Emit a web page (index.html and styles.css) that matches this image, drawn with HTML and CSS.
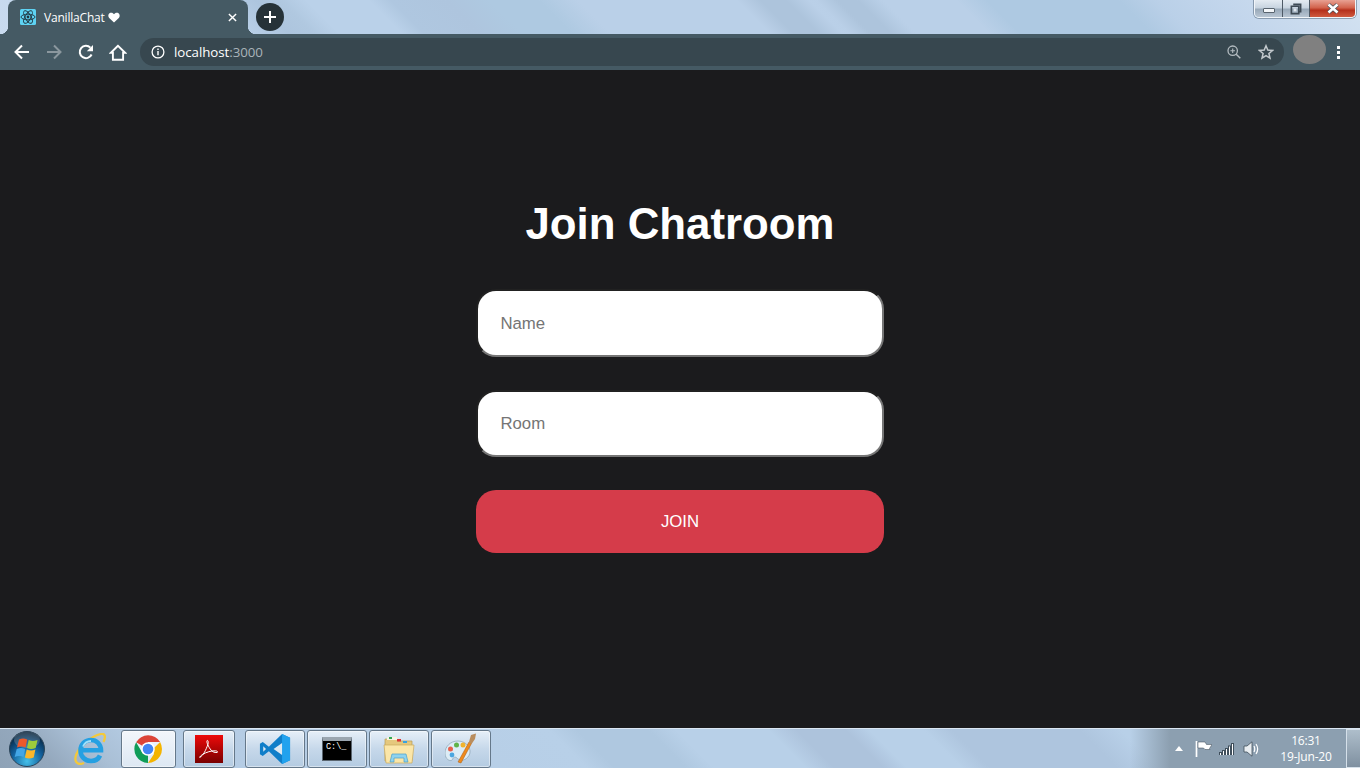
FILE: index.html
```html
<!DOCTYPE html>
<html lang="en">
<head>
<meta charset="utf-8">
<title>VanillaChat</title>
<link rel="stylesheet" href="styles.css">
</head>
<body>
<div class="screen">
  <header class="chrome">
    <div class="titlebar">
      <div class="tab">
        <svg class="favicon" viewBox="0 0 16 16"><rect width="16" height="16" rx="1.5" fill="#5ed3f3"/><g fill="none" stroke="#20343f" stroke-width=".9"><ellipse cx="8" cy="8" rx="7" ry="2.8"/><ellipse cx="8" cy="8" rx="7" ry="2.8" transform="rotate(60 8 8)"/><ellipse cx="8" cy="8" rx="7" ry="2.8" transform="rotate(120 8 8)"/></g><circle cx="8" cy="8" r="1.4" fill="#20343f"/></svg>
        <span class="tab-title">VanillaChat</span>
        <svg class="heart" viewBox="0 0 12 11"><path d="M6 10.6 1.2 5.9C-.3 4.3.2 1.5 2.3.8 3.8.3 5.2.9 6 2.3 6.8.9 8.2.3 9.7.8c2.1.7 2.6 3.5 1.100 5.100z" fill="#fff"/></svg>
        <svg class="tab-close" viewBox="0 0 10 10"><path d="M1 1l8 8M9 1l-8 8" stroke="#fff" stroke-width="1.6"/></svg>
      </div>
      <div class="newtab"><svg viewBox="0 0 14 14"><path d="M7 1v12M1 7h12" stroke="#fff" stroke-width="2"/></svg></div>
      <div class="winbtns">
        <div class="wb wb-min"><span class="min-glyph"></span></div>
        <div class="wb wb-max"><svg viewBox="0 0 13 13"><path d="M3.5 1.500h8v8h-2M1.500 3.500h8v8h-8z" fill="none" stroke="#3e4a55" stroke-width="1.8"/><rect x="4" y="6" width="3" height="3" fill="#dfe6ec"/></svg></div>
        <div class="wb wb-close"><svg viewBox="0 0 14 11"><path d="M2.500 1.500l9 8M11.500 1.500l-9 8" stroke="#46505a" stroke-width="4"/><path d="M2.500 1.500l9 8M11.500 1.500l-9 8" stroke="#fff" stroke-width="2.6"/></svg></div>
      </div>
    </div>
    <div class="toolbar">
      <svg class="navicon" viewBox="0 0 16 16"><path d="M15 8H2M8 1.500 1.500 8 8 14.500" fill="none" stroke="#fff" stroke-width="2"/></svg>
      <svg class="navicon" viewBox="0 0 16 16"><path d="M1 8h13M8 1.500 14.500 8 8 14.500" fill="none" stroke="#8b979e" stroke-width="2"/></svg>
      <svg class="navicon" viewBox="0 0 16 16"><path d="M13.600 10.500A6.200 6.200 0 1 1 12.400 3.600" fill="none" stroke="#fff" stroke-width="2"/><path d="M15 1v6.200H8.800z" fill="#fff"/></svg>
      <svg class="navicon home" viewBox="0 0 18 17"><path d="M9 1.800 1.800 8.800h2.100v7h10.200v-7h2.100z" fill="none" stroke="#fff" stroke-width="1.900"/></svg>
      <div class="omnibox">
        <svg class="info" viewBox="0 0 14 14"><circle cx="7" cy="7" r="5.900" fill="none" stroke="#fff" stroke-width="1.300"/><path d="M6.300 6h1.400v4.300H6.300zM6.300 3.500h1.400v1.400H6.300z" fill="#fff"/></svg>
        <span class="url">localhost<span class="port">:3000</span></span>
        <svg class="zoomicon" viewBox="0 0 14 14"><circle cx="5.700" cy="5.700" r="4.700" fill="none" stroke="#b4bcc1" stroke-width="1.300"/><path d="M9.200 9.200 13.300 13.300" stroke="#b4bcc1" stroke-width="1.500"/><path d="M3.400 5.700h4.600M5.700 3.400V8" stroke="#b4bcc1" stroke-width="1.100"/></svg>
        <svg class="star" viewBox="0 0 16 16"><path d="M8 1.800l1.800 4.300 4.700.4-3.600 3 1.100 4.600L8 11.600l-4 2.500 1.100-4.600-3.600-3 4.700-.4z" fill="none" stroke="#c3c9cd" stroke-width="1.500"/></svg>
      </div>
      <div class="avatar"></div>
      <div class="dots"><i></i><i></i><i></i></div>
    </div>
  </header>

  <main class="page">
    <h1 class="title">Join Chatroom</h1>
    <form class="form">
      <input class="field" type="text" placeholder="Name">
      <input class="field" type="text" placeholder="Room">
      <button class="join" type="button">JOIN</button>
    </form>
  </main>

  <footer class="taskbar">
    <svg class="orb" viewBox="0 0 36 36">
      <defs><radialGradient id="og" cx=".5" cy=".85" r=".8"><stop offset="0" stop-color="#45c0ea"/><stop offset=".55" stop-color="#125f9b"/><stop offset="1" stop-color="#06233c"/></radialGradient></defs>
      <circle cx="18" cy="18" r="17.500" fill="url(#og)" stroke="#2c4458"/>
      <ellipse cx="18" cy="9" rx="13" ry="8" fill="#fff" opacity=".18"/>
      <path d="M10 8.500c3-1.400 5-1.400 8.200 0l-1.700 8c-3-1.300-5.500-1.300-8.500 0z" fill="#ec5a2b"/>
      <path d="M19.700 9c3 1.400 5.300 1.400 8.800 0l-1.800 8c-3.300 1.300-6 1.300-8.700 0z" fill="#9ccb3b"/>
      <path d="M7.700 18c3-1.400 5.500-1.400 8.500 0l-1.700 8c-3-1.300-5.800-1.300-8.800 0z" fill="#43a6e6"/>
      <path d="M17.700 18.400c3 1.400 5.700 1.400 8.700 0l-1.700 8c-3.300 1.300-6 1.300-8.800 0z" fill="#fbb72a"/>
    </svg>
    <svg class="ie" viewBox="0 0 32 32">
      <path d="M10 30C3 33-.5 28 2.500 21 6 12.500 18 3 27 1c4-.8 5 2.500 2.500 8" fill="none" stroke="#f4c93a" stroke-width="2.300"/>
      <path d="M7.500 17.200H27C27 11 22.500 7 17 7 11 7 6.500 11.500 6.500 17.500 6.500 23.500 11 28 17 28c4 0 7.500-2 9-5.500" fill="none" stroke="#25a0e2" stroke-width="4.600"/>
      <path d="M9 13.500C10.500 10 13.500 8 17 8" fill="none" stroke="#9fe0fa" stroke-width="1.800"/>
    </svg>
    <div class="tb tb-chrome">
      <svg class="tbicon" viewBox="0 0 32 32">
        <path d="M16 16 4.100 9.200A14 14 0 0 1 28.100 9H16z" fill="#db4437"/>
        <path d="M16 30A14 14 0 0 1 4.100 9.200L11 21l5 1z" fill="#0f9d58"/>
        <path d="M28.100 9A14 14 0 0 1 16 30l6-9-1-5z" fill="#f4b400"/>
        <circle cx="16" cy="16" r="6.800" fill="#fff"/><circle cx="16" cy="16" r="5.300" fill="#4285f4"/>
      </svg>
    </div>
    <div class="tb tb-pdf">
      <svg class="tbicon pdf" viewBox="0 0 28 28">
        <defs><linearGradient id="pg" x1="0" y1="0" x2="0" y2="1"><stop offset="0" stop-color="#ed0a0a"/><stop offset="1" stop-color="#790000"/></linearGradient></defs>
        <rect width="28" height="28" fill="url(#pg)"/>
        <path d="M5 22c3-1 6-7 8-13 .6-2 0-4-.8-3.500-1 .8.300 4.500 3 8.500 2 2.800 4 3.800 7 3.500 1-.3.300-1.700-2-1.700-4-.2-9 1.500-12.500 3.500-2 1.500-3.600 3-2.700 3.200z" fill="none" stroke="#fff" stroke-width="1"/>
      </svg>
    </div>
    <div class="tb tb-code">
      <svg class="tbicon" viewBox="0 0 34 34">
        <path d="M24.500 1 33 5v24l-8.500 4-14-13.500L4 24.500 1 22.500v-11L4 9.500l6.500 5z" fill="#0f7ec9"/>
        <path d="M24.500 1 33 5v24l-8.500 4z" fill="#21a2ee"/>
        <path d="M24.500 10.500V23.500L15.500 17z" fill="#dbe8f2"/>
        <path d="M4.500 14 7.500 17l-3 3z" fill="#dbe8f2"/>
      </svg>
    </div>
    <div class="tb tb-cmd"><div class="cmd"><span class="cmd-text">C:\_</span></div></div>
    <div class="tb tb-folder">
      <svg class="tbicon" viewBox="0 0 32 32">
        <path d="M2 6h11l2 2h14v20H2z" fill="#e5c87d" stroke="#b69b58" stroke-width=".7"/>
        <rect x="4" y="4" width="10" height="3" fill="#f7f3e2"/><rect x="6" y="4" width="3" height="2" fill="#33a852"/><rect x="14" y="6" width="4" height="2.500" fill="#d33"/><rect x="20" y="8" width="4" height="2" fill="#38a2e0"/>
        <path d="M1 12h30l-2 18H3z" fill="#fbe6a8" stroke="#c8a95d" stroke-width=".7"/>
        <path d="M9 21h14l2 8h-4v-4h-10v4H7z" fill="#8fd3ee" stroke="#4a9fc9" stroke-width=".7"/>
      </svg>
    </div>
    <div class="tb tb-paint">
      <svg class="tbicon" viewBox="0 0 32 32">
        <path d="M13 8C5 8 0 14 0 20c0 7 6 9 7.500 6.500 1-3 3-3 5-1 3 3 8.500 2 11.500-3 3.500-6-2-14.500-11-14.500z" fill="#dcecf6" stroke="#8aa2b3" stroke-width=".7"/>
        <circle cx="5.500" cy="16" r="2.500" fill="#e8604c"/><circle cx="11.500" cy="12" r="2.500" fill="#60b34a"/><circle cx="18" cy="12" r="2.500" fill="#f0b32f"/><circle cx="7" cy="22" r="2.400" fill="#4ba6e0"/>
        <path d="M13 29 24 9l2.500 1.500L16 30z" fill="#ee8a1d" stroke="#a85a10" stroke-width=".5"/>
        <path d="M23.800 9.500 26 2l5-1.500-1 5.500-3.400 5z" fill="#b98d5e"/>
      </svg>
    </div>
    <div class="tray">
      <svg class="tray-arrow" viewBox="0 0 8 5"><path d="M4 0 8 5H0z" fill="#fff"/></svg>
      <svg class="tray-flag" viewBox="0 0 17 16"><path d="M1.500 0v16" stroke="#fff" stroke-width="1.700"/><path d="M3 1h7l1.500 2.500H17l-2.500 4 .5 1H10L8.500 7H3z" fill="#fff" stroke="#3a4650" stroke-width=".5"/></svg>
      <svg class="tray-signal" viewBox="0 0 16 12"><path d="M0 9h3v3H0zM3 7h3v5H3zM6 5h3v7H6zM9 2.500h3V12H9zM12 0h3v12h-3z" fill="#3f4e5b"/><path d="M1 10h1v2H1zM4 8h1v4H4zM7 6h1v6H7zM10 3.500h1V12h-1zM13 1h1v11h-1z" fill="#fff"/></svg>
      <svg class="tray-sound" viewBox="0 0 16 16"><path d="M1 5h3L9 .8v14.400L4 11H1z" fill="#e8edf1" stroke="#3f4e5b" stroke-width=".8"/><path d="M11 5c1 2 1 4 0 6M13 3c2 3 2 7 0 10" fill="none" stroke="#fff" stroke-width="1.200"/></svg>
      <div class="clock"><span>16:31</span><span>19-Jun-20</span></div>
      <div class="showdesk"></div>
    </div>
  </footer>
</div>
</body>
</html>
```
FILE: styles.css
```css
* { box-sizing: border-box; }
html, body { margin: 0; height: 100%; overflow: hidden; }
body { font-family: "Liberation Sans", Arial, sans-serif; background: #1b1b1d; }
.screen { width: 1360px; height: 768px; display: flex; flex-direction: column; }

.chrome { flex: none; }
.titlebar {
  height: 34px; display: flex; align-items: flex-start; padding-left: 8px;
  background:
    linear-gradient(45deg,
      #c9dbef 0, #bcd2ea 170px, #adc5de 205px, #b0c8e0 222px, #bad1e9 240px, #bad1e9 285px,
      #afc7e0 300px, #aec5de 340px, #aec9e1 370px, #aec9e1 405px, #bad0e8 432px, #bad0e8 545px,
      #adc4dc 562px, #adc4dc 580px, #bad0e8 596px, #b9cfe7 602px, #adc4dc 616px, #adc4dc 630px,
      #bad0e8 648px, #bad0e8 700px, #aec9e2 722px, #aec9e2 815px, #bad0e8 842px, #c3d6ec 890px, #d3e2f1 985px);
}
.tab {
  position: relative; width: 240px; height: 34px; background: #455a64;
  border-radius: 8px 8px 0 0; display: flex; align-items: center; padding-left: 12px; color: #fff;
}
.tab::before, .tab::after { content: ""; position: absolute; bottom: 0; width: 8px; height: 8px; }
.tab::before { left: -8px; background: radial-gradient(circle at 0 0, transparent 8px, #455a64 8.5px); }
.tab::after { right: -8px; background: radial-gradient(circle at 100% 0, transparent 8px, #455a64 8.5px); }
.favicon { width: 16px; height: 16px; flex: none; }
.tab-title { margin-left: 8px; font: 12px "Open Sans", "Noto Sans", sans-serif; letter-spacing: -.2px; }
.heart { width: 12px; height: 11px; margin-left: 3px; flex: none; }
.tab-close { width: 9px; height: 9px; margin-left: auto; margin-right: 11px; flex: none; }
.newtab {
  width: 28px; height: 28px; margin: 3px 0 0 8px; border-radius: 50%; background: #263238;
  display: flex; align-items: center; justify-content: center;
}
.newtab svg { width: 14px; height: 14px; }
.winbtns {
  margin-left: auto; margin-right: 4px; width: 102px; height: 18px; display: flex;
  border: 1px solid #f1f5f9; border-top: 0; border-radius: 0 0 5px 5px; overflow: hidden;
  box-shadow: 0 0 0 1px rgba(60,80,100,.45);
}
.wb { display: flex; align-items: center; justify-content: center; border-right: 1px solid #4e5a66; }
.wb-min { width: 28px; background: linear-gradient(#e4ebf2 0, #c8d4e0 45%, #99a9b9 55%, #b8c5d2 100%); }
.wb-max { width: 27px; background: linear-gradient(#e4ebf2 0, #c8d4e0 45%, #99a9b9 55%, #b8c5d2 100%); }
.wb-close { flex: 1; border-right: 0; background: linear-gradient(#e8a193 0, #d2634d 45%, #b5301b 60%, #cf5a3f 100%); }
.min-glyph { width: 12px; height: 5px; margin-top: 4px; background: #f3f6f9; border: 1px solid #59646f; border-radius: 1px; }
.wb-max svg { width: 12px; height: 12px; }
.wb-close svg { width: 14px; height: 11px; }

.toolbar {
  height: 36px; background: #455a64; display: flex; align-items: center; padding-left: 14px;
}
.navicon { width: 16px; height: 16px; margin-right: 16px; flex: none; }
.navicon.home { width: 18px; height: 17px; margin: 0 15px 0 -1px; }
.omnibox {
  width: 1144px; height: 28px; margin-left: -2px; background: #37474f; border-radius: 14px;
  display: flex; align-items: center; padding: 0 10px 0 11px;
}
.info { width: 14px; height: 14px; flex: none; }
.url { margin-left: 9px; font: 13.3px "Open Sans", "Noto Sans", sans-serif; color: #fff; letter-spacing: -.05px; }
.port { color: #aab4ba; }
.zoomicon { width: 14px; height: 14px; margin-left: auto; flex: none; }
.star { width: 16px; height: 16px; margin-left: 17px; flex: none; }
.avatar { width: 33px; height: 29px; margin: 0 0 5px 9px; border-radius: 50%; background: #808080; flex: none; }
.dots { margin-left: 11px; display: flex; flex-direction: column; gap: 2px; }
.dots i { display: block; width: 3px; height: 3px; background: #fff; }

.page {
  flex: 1; min-height: 0; background: #1b1b1d; display: flex; flex-direction: column; align-items: center;
  padding-top: 128px;
}
.title { margin: 0; color: #fff; font-size: 43.8px; font-weight: 700; line-height: 52px; }
.form { width: 408px; margin-top: 39px; display: flex; flex-direction: column; }
.field {
  width: 100%; height: 67.5px; margin-bottom: 33px; padding: 2px 22.4px 0; background: #fff;
  border: 2px inset #767676; border-radius: 20px; font: 16.8px "Liberation Sans", Arial, sans-serif; color: #222;
}
.field::placeholder { color: #757575; opacity: 1; }
.join {
  height: 63px; border: 0; border-radius: 20px; background: #d53c4a; color: #fff;
  font: 16.8px "Liberation Sans", Arial, sans-serif; padding: 0;
}

.taskbar {
  flex: none; height: 40px; display: flex; align-items: center; padding-left: 9px;
  border-top: 1px solid #dbe7f3;
  background:
    linear-gradient(90deg, transparent 0, transparent 1130px, #8c9fb0 1170px, #8c9fb0 1360px),
    linear-gradient(45deg,
      #8ea2b6 0, #94a8bd 40px, #a9bfd5 80px, #b4cbe3 120px, #b8d0e8 415px, #afc8e0 435px, #afc8e0 485px,
      #b8d0e8 505px, #b8d0e8 570px, #adc3dc 590px, #adc3dc 625px, #b8d0e8 642px, #b8d0e8 680px,
      #aec5de 700px, #aec5de 790px, #b8d0e8 820px, #b8d0e8 985px);
}
.orb { width: 36px; height: 36px; flex: none; }
.ie { width: 32px; height: 32px; margin-left: 29px; flex: none; }
.tb {
  height: 38px; flex: none; display: flex; align-items: center; justify-content: center;
  border: 1px solid #65788a; border-radius: 3px;
  background: linear-gradient(#e6eff8 0, #c6d8ea 50%, #b4cbe1 100%);
  box-shadow: inset 0 0 0 1px rgba(255,255,255,.45);
}
.tb-chrome { width: 55px; margin-left: 15px; padding-right: 2px; background: linear-gradient(#f2f6fb, #dde8f3); }
.tb-pdf { width: 52px; margin-left: 7px; }
.tb-code, .tb-cmd, .tb-folder, .tb-paint { width: 60px; margin-left: 2px; }
.tb-code { margin-left: 10px; }
.tbicon { width: 32px; height: 32px; }
.tbicon.pdf { width: 28px; height: 28px; }
.cmd {
  width: 30px; height: 24px; background: #000; border: 1px solid #5b6670; border-top: 4px solid #9aa5af;
  color: #fff; font: 8.5px/13px "Liberation Mono", monospace; padding-left: 3px;
}
.cmd-text { display: block; }
.tray { margin-left: auto; display: flex; align-items: center; height: 100%; color: #fff; }
.tray-arrow { width: 8px; height: 5px; margin-right: 12px; }
.tray-flag { width: 17px; height: 16px; margin-right: 7px; }
.tray-signal { width: 16px; height: 12px; margin-right: 8px; }
.tray-sound { width: 16px; height: 16px; margin-right: 14px; }
.clock { width: 66px; display: flex; flex-direction: column; align-items: center; gap: 3px; font: 12px/13px "Open Sans", "Noto Sans", sans-serif; letter-spacing: -.2px; }
.showdesk {
  width: 14px; height: 100%; margin-left: 7px; border: 1px solid #d5e0ea; border-right: 0;
  background: linear-gradient(#aebecb, #7f90a0);
}
```
